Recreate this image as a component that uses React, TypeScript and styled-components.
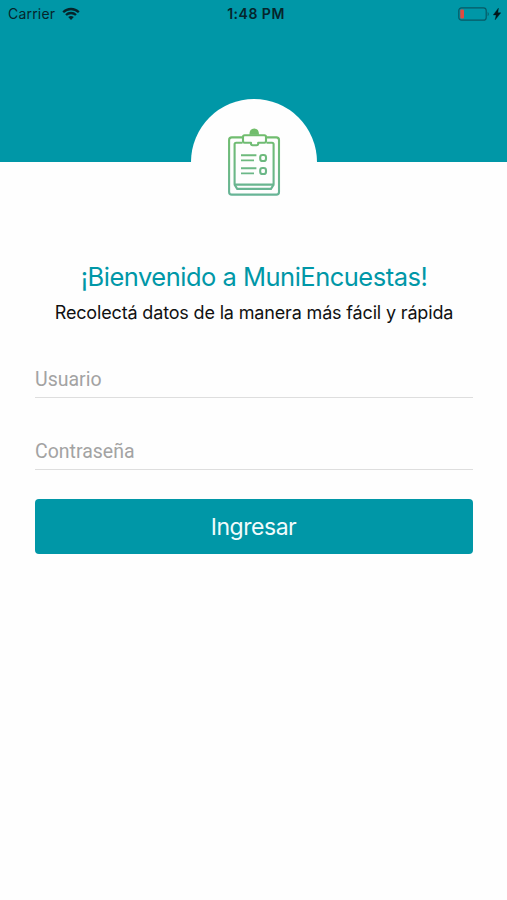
import React from "react";
import styled, { createGlobalStyle } from "styled-components";

const teal = "#0097a7";

const GlobalStyle = createGlobalStyle`
  * { box-sizing: border-box; }
  body { margin: 0; background: #fefefe; }
`;

const Screen = styled.main`
  display: flex;
  flex-direction: column;
  width: 507px;
  height: 900px;
  overflow: hidden;
  background: #fefefe;
  font-family: Inter, "Liberation Sans", sans-serif;
`;

const Header = styled.header`
  display: flex;
  flex-direction: column;
  align-items: center;
  justify-content: space-between;
  height: 162px;
  flex: none;
  background: ${teal};
`;

const StatusBar = styled.div`
  display: grid;
  grid-template-columns: 1fr auto 1fr;
  align-items: center;
  width: 100%;
  height: 27px;
  padding: 0 6px 0 8px;
  color: #06252b;
  line-height: 17px;
`;

const Carrier = styled.div`
  display: flex;
  align-items: center;
  gap: 7px;
  font-size: 14px;
  letter-spacing: 0.2px;
`;

const Clock = styled.div`
  padding-left: 3px;
  font-size: 14px;
  font-weight: 600;
  letter-spacing: 0.5px;
`;

const Power = styled.div`
  display: flex;
  align-items: center;
  justify-content: flex-end;
  gap: 3px;
`;

const LogoCircle = styled.div`
  display: flex;
  justify-content: center;
  align-items: center;
  flex: none;
  width: 126px;
  height: 126px;
  margin-bottom: -63px;
  border-radius: 50%;
  background: #fefefe;
`;

const Content = styled.section`
  display: flex;
  flex-direction: column;
  padding: 97px 34px 0 35px;
`;

const Title = styled.h1`
  margin: 0;
  text-align: center;
  color: ${teal};
  font-size: 25.5px;
  font-weight: 400;
  line-height: 35px;
  letter-spacing: -0.5px;
  white-space: nowrap;
`;

const Subtitle = styled.p`
  margin: 7px 0 0;
  text-align: center;
  color: #111;
  font-size: 18px;
  line-height: 24px;
  letter-spacing: -0.16px;
  white-space: nowrap;
`;

const Form = styled.form`
  display: flex;
  flex-direction: column;
  margin-top: 36px;
`;

const Field = styled.input`
  display: block;
  width: 100%;
  height: 37px;
  margin: 0 0 35px;
  padding: 0;
  border: 0;
  border-bottom: 1px solid #dedede;
  border-radius: 0;
  outline: 0;
  background: transparent;
  color: #333;
  font-family: Roboto, sans-serif;
  font-size: 19.5px;
  &::placeholder { color: #a3a3a3; opacity: 1; }
`;

const Submit = styled.button`
  height: 55px;
  margin: -6px 0 0;
  padding: 0 1px 0 0;
  border: 0;
  border-radius: 4px;
  background: ${teal};
  color: #f0fbfc;
  font-family: Inter, sans-serif;
  font-size: 23px;
  line-height: 28px;
  letter-spacing: -0.45px;
`;

const WifiIcon = () => (
  <svg width="18" height="14" viewBox="0 0 18 14" fill="none" stroke="#06252b" strokeWidth="2.3">
    <path d="M1.2 5.2C5.5 .9 12.5 .9 16.8 5.2" />
    <path d="M4 8C6.8 5.3 11.2 5.3 14 8" />
    <path d="M6.2 10.1Q9 7.8 11.8 10.1L9 13Z" fill="#06252b" stroke="none" />
  </svg>
);

const BatteryIcon = () => (
  <svg width="32" height="14" viewBox="0 0 32 14">
    <rect x="0.8" y="0.8" width="27.4" height="12.4" rx="2.8" fill="none" stroke="#075965" strokeWidth="1.2" />
    <rect x="2.3" y="2.4" width="3.7" height="9.2" rx="1" fill="#e24a40" />
    <path d="M29.7 4.7Q31.8 7 29.7 9.3Z" fill="#075965" />
  </svg>
);

const BoltIcon = () => (
  <svg width="8" height="12" viewBox="0 0 8 12">
    <path d="M5.4 .2L.3 6.9H3.2L2.2 11.8L7.8 4.8H4.8Z" fill="#03161a" stroke="#03161a" strokeWidth="0.4" />
  </svg>
);

const ClipboardIcon = () => (
  <svg width="54" height="70" viewBox="227 127 54 70" fill="none" stroke="url(#leaf)" strokeWidth="2.1" strokeLinejoin="round">
    <defs>
      <linearGradient id="leaf" gradientUnits="userSpaceOnUse" x1="254" y1="128" x2="254" y2="196">
        <stop offset="0" stopColor="#72be69" />
        <stop offset="1" stopColor="#67b497" />
      </linearGradient>
    </defs>
    <path d="M242.5 137.4H231.8Q229.1 137.4 229.1 140.1V191.9Q229.1 194.6 231.8 194.6H276.3Q279 194.6 279 191.9V140.1Q279 137.4 276.3 137.4H266.5" />
    <path d="M242.5 142.7H236.2Q234.6 142.7 234.6 144.3V184.6H273.6V144.3Q273.6 142.7 272 142.7H266.5" />
    <path d="M234.6 184.6L237.2 188.9H271L273.6 184.6" />
    <path d="M244.6 135.3H264.4Q266 135.3 266 136.9V141.1Q266 142.7 264.4 142.7H258.2V143.6Q258.2 145.2 256.6 145.2H252.6Q251 145.2 251 143.6V142.7H244.6Q243 142.7 243 141.1V136.9Q243 135.3 244.6 135.3Z" />
    <path d="M249.4 134.8Q249.4 128.5 254.2 128.5Q259 128.5 259 134.8Z" fill="url(#leaf)" stroke="none" />
    <path d="M241 155.3H256.4M241 160.4H254M241 168.2H256.4M241 173.4H254" strokeWidth="1.9" />
    <rect x="260.2" y="155" width="5.8" height="6" rx="2.3" />
    <rect x="260.2" y="168" width="5.8" height="6" rx="2.3" />
  </svg>
);

export default function App() {
  return (
    <Screen>
      <GlobalStyle />
      <Header>
        <StatusBar>
          <Carrier>Carrier <WifiIcon /></Carrier>
          <Clock>1:48 PM</Clock>
          <Power><BatteryIcon /><BoltIcon /></Power>
        </StatusBar>
        <LogoCircle><ClipboardIcon /></LogoCircle>
      </Header>
      <Content>
        <Title>¡Bienvenido a MuniEncuestas!</Title>
        <Subtitle>Recolectá datos de la manera más fácil y rápida</Subtitle>
        <Form onSubmit={(e) => e.preventDefault()}>
          <Field placeholder="Usuario" aria-label="Usuario" />
          <Field type="password" placeholder="Contraseña" aria-label="Contraseña" />
          <Submit type="submit">Ingresar</Submit>
        </Form>
      </Content>
    </Screen>
  );
}
